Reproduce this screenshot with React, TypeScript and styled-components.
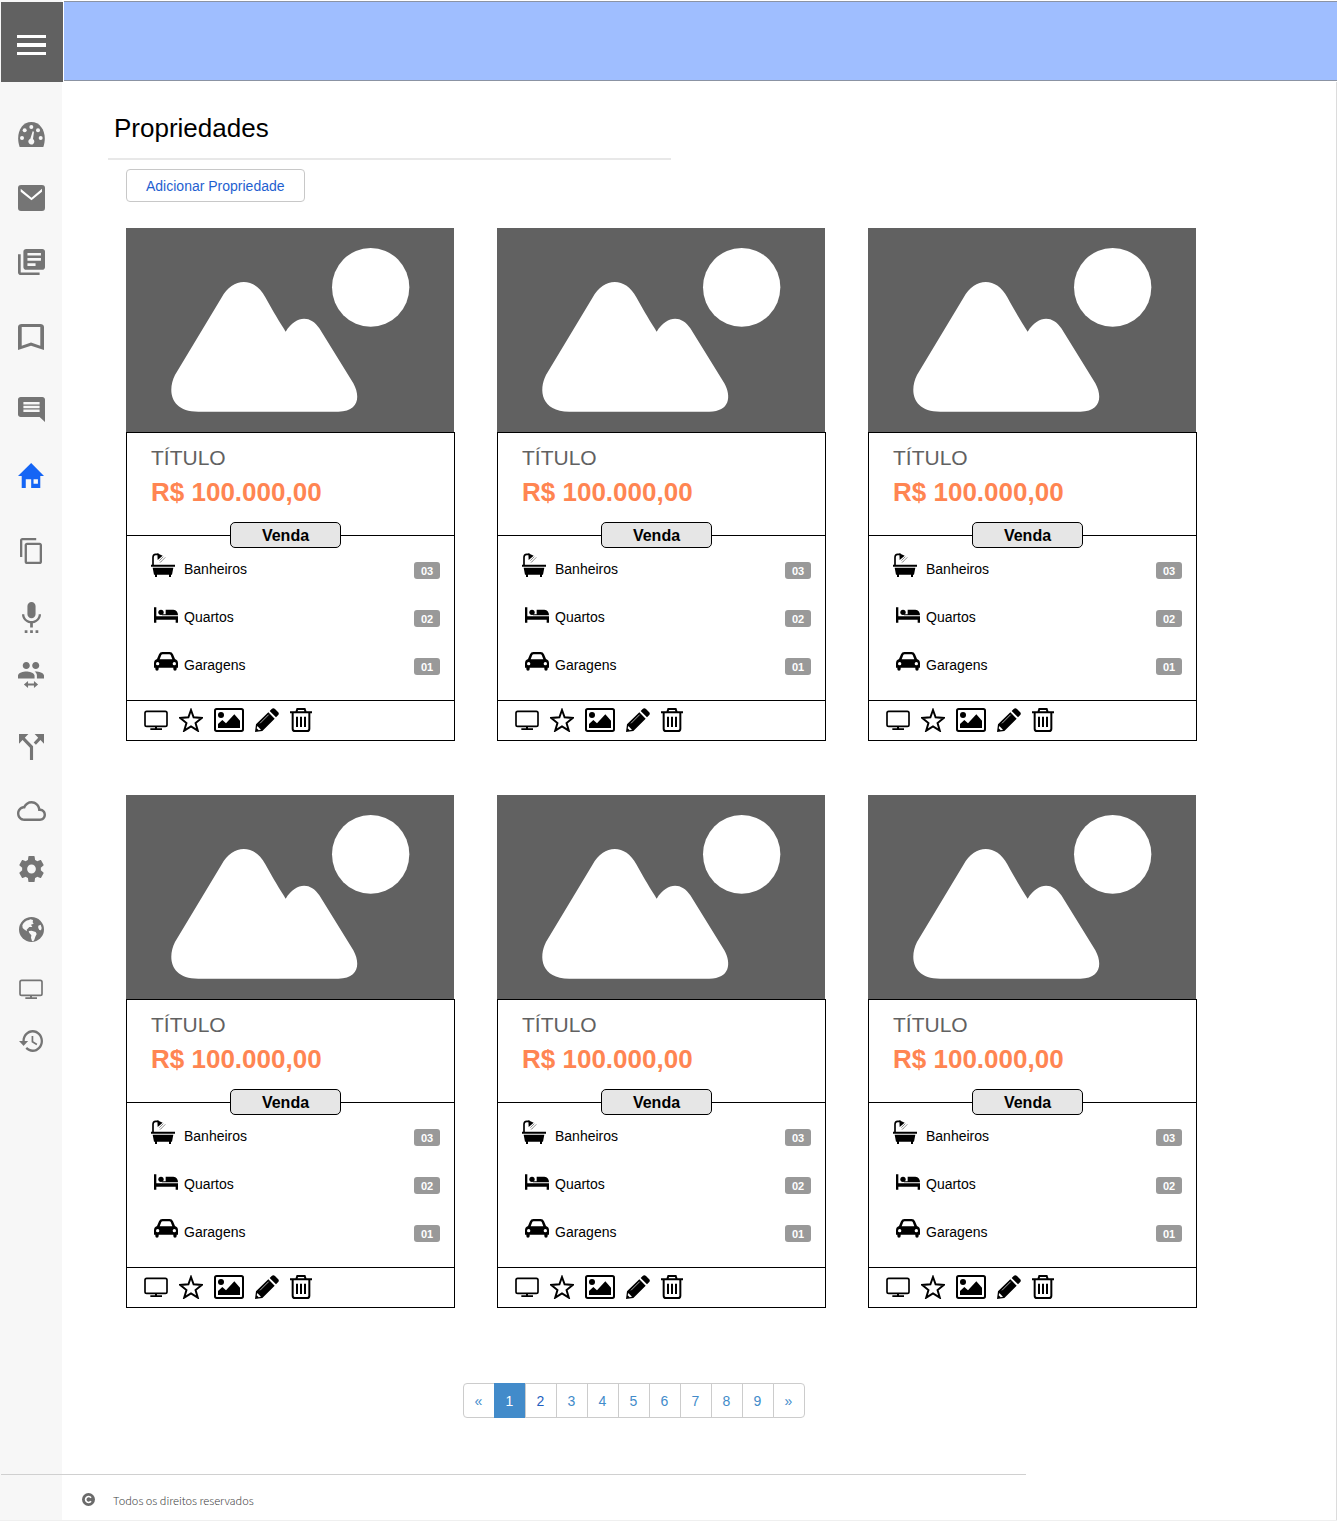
import React from "react";
import styled, { createGlobalStyle } from "styled-components";

const GlobalStyle = createGlobalStyle`
  *, *::before, *::after { box-sizing: border-box; }
  body {
    margin: 0;
    background: #fff;
    color: #000;
    font-family: "Liberation Sans", Arial, sans-serif;
    font-size: 14px;
  }
  svg { display: block; }
`;

const Page = styled.div`
  display: grid;
  grid-template-columns: 62px minmax(0, 1fr);
  grid-template-rows: auto 1fr auto;
  min-height: 100vh;
  border-bottom: 1px solid #efefef;
`;

const TopBar = styled.header`
  grid-column: 1 / -1;
  grid-row: 1;
  display: flex;
  align-items: flex-start;
  gap: 1px;
  padding: 1px 0 0 1px;
`;

const MenuButton = styled.button`
  display: grid;
  place-items: center;
  width: 62px;
  height: 80px;
  margin-top: 1px;
  padding: 6px 2px 0 0;
  border: 0;
  background: #616161;
  color: #fff;
`;

const Banner = styled.div`
  flex: 1;
  height: 80px;
  border: 1px solid #8b93a3;
  border-width: 1px 0;
  background: #9fbeff;
`;

const Sidebar = styled.nav`
  grid-column: 1;
  grid-row: 1 / 4;
  padding: 118px 0 0;
  background: #f7f7f7;
`;

const NavLink = styled.a<{ $gap: number; $active?: boolean }>`
  display: grid;
  place-items: center;
  height: 32px;
  margin-top: ${(p) => p.$gap}px;
  color: ${(p) => (p.$active ? "#1565f5" : "#757575")};
`;

const Main = styled.main`
  grid-column: 2;
  grid-row: 2;
  padding: 30px 46px 56px;
  border-right: 1px solid #dcdcdc;
`;

const Heading = styled.h1`
  width: 563px;
  max-width: 100%;
  margin: 0;
  padding: 0 6px 14px;
  border-bottom: 2px solid #e8e8e8;
  font-size: 26px;
  font-weight: 400;
  line-height: 32px;
`;

const Content = styled.div`
  padding: 9px 0 0 18px;
`;

const AddButton = styled.button`
  height: 33px;
  padding: 0 19px;
  border: 1px solid #c8c8c8;
  border-radius: 4px;
  background: #fff;
  color: #1f5fd0;
  font: inherit;
`;

const Cards = styled.div`
  display: grid;
  grid-template-columns: repeat(auto-fill, 329px);
  gap: 54px 42px;
  margin-top: 26px;
`;

const Card = styled.article`
  display: flex;
  flex-direction: column;
`;

const Photo = styled.svg`
  width: 328px;
  height: 204px;
  background: #616161;
  fill: #fff;
`;

const CardBody = styled.div`
  border: 1px solid #000;
`;

const Summary = styled.div`
  padding: 13px 24px 15px;
`;

const CardTitle = styled.h2`
  margin: 0 0 7px;
  color: #616161;
  font-size: 21px;
  font-weight: 400;
  line-height: 24px;
`;

const Price = styled.p`
  margin: 0;
  color: #ff8552;
  font-size: 26px;
  font-weight: 700;
  line-height: 30px;
`;

const Divider = styled.div`
  display: grid;
  grid-template-columns: 103px 111px 1fr;
  align-items: center;
  &::before, &::after {
    content: "";
    height: 1px;
    background: #000;
  }
`;

const Status = styled.span`
  height: 26px;
  border: 1px solid #000;
  border-radius: 5px;
  background: #e6e6e6;
  font-size: 16px;
  font-weight: 700;
  line-height: 25px;
  text-align: center;
`;

const Features = styled.ul`
  display: flex;
  flex-direction: column;
  gap: 16px;
  margin: 0;
  padding: 5px 14px 19px 24px;
  list-style: none;
`;

const Feature = styled.li`
  display: flex;
  align-items: center;
  gap: 3px;
  height: 32px;
  & > svg { align-self: flex-start; }
`;

const Count = styled.span`
  width: 26px;
  height: 17px;
  margin: 2px 0 0 auto;
  border-radius: 3px;
  background: #999;
  color: #fff;
  font-size: 11px;
  font-weight: 700;
  line-height: 18px;
  text-align: center;
`;

const Actions = styled.div`
  display: flex;
  align-items: center;
  gap: 11px;
  height: 40px;
  padding: 0 0 1px 17px;
  border-top: 1px solid #000;
`;

const ActionButton = styled.button`
  padding: 0;
  border: 0;
  background: none;
  color: #000;
`;

const Pager = styled.nav`
  display: flex;
  justify-content: center;
  width: 1071px;
  max-width: 100%;
  margin-top: 75px;
  padding-right: 56px;
`;

const PageLink = styled.a<{ $active?: boolean; $strong?: boolean }>`
  width: 32px;
  height: 35px;
  margin-left: -1px;
  border: 1px solid ${(p) => (p.$active ? "#428bca" : "#ccc")};
  background: ${(p) => (p.$active ? "#428bca" : "#fff")};
  color: ${(p) => (p.$active ? "#fff" : p.$strong ? "#1f5fc0" : "#428bca")};
  line-height: 35px;
  text-align: center;
  text-decoration: none;
  &:first-child { margin-left: 0; border-radius: 4px 0 0 4px; }
  &:last-child { border-radius: 0 4px 4px 0; }
`;

const Footer = styled.footer`
  grid-column: 1 / -1;
  grid-row: 3;
  display: flex;
  flex-wrap: wrap;
  align-items: center;
  border-right: 1px solid #dcdcdc;
`;

const FooterRule = styled.hr`
  width: 76.7%;
  height: 1px;
  margin: 0 20% 0 1px;
  border: 0;
  background: #d0d0d0;
`;

const Copyright = styled.small`
  display: flex;
  align-items: center;
  gap: 18px;
  height: 45px;
  padding: 4px 0 0 82px;
  color: #444;
  font-family: "Noto Sans CJK SC", "Open Sans", sans-serif;
  font-size: 11px;
  font-weight: 300;
  & > svg { color: #6a6a6a; }
`;

type IconProps = { w: number; h: number; box: string; children: React.ReactNode };

const Icon = ({ w, h, box, children }: IconProps) => (
  <svg width={w} height={h} viewBox={box} preserveAspectRatio="none" fill="currentColor" aria-hidden="true">
    {children}
  </svg>
);

const Monitor = () => (
  <Icon w={24} h={20} box="0 0 72 60">
    <rect x="3" y="4" width="66" height="45" rx="5" fill="none" stroke="currentColor" strokeWidth="5" />
    <path d="M33 49h6v6h15v5H19v-5h14z" />
  </Icon>
);

type NavItem = { label: string; gap: number; icon: React.ReactNode; active?: boolean };

const navItems: NavItem[] = [
  {
    label: "Painel", gap: 0, icon: (
      <Icon w={27} h={25} box="0 0 81 75">
        <path d="M5 75C-8 38 8 0 40 0s49 38 36 75z" />
        <g fill="#f7f7f7">
          <circle cx="12" cy="48" r="6" /><circle cx="20" cy="25" r="6" /><circle cx="40" cy="15" r="6" />
          <circle cx="60" cy="25" r="6" /><circle cx="68" cy="48" r="6" />
          <path d="M44 28l4 1-3 22a9 9 0 1 1-8-1z" />
        </g>
      </Icon>
    ),
  },
  {
    label: "Mensagens", gap: 32, icon: (
      <Icon w={27} h={26} box="0 0 80 77">
        <rect width="80" height="77" rx="9" />
        <path d="M8 11l32 27 31-27v9L40 45 8 20z" fill="#fff" />
      </Icon>
    ),
  },
  { label: "Biblioteca", gap: 32, icon: <Icon w={27} h={26} box="2 2 20 20"><path d="M4 6H2v14c0 1.1.9 2 2 2h14v-2H4V6zm16-4H8c-1.1 0-2 .9-2 2v12c0 1.1.9 2 2 2h12c1.1 0 2-.9 2-2V4c0-1.1-.9-2-2-2zm-1 9H9V9h10v2zm-4 4H9v-2h6v2zm4-8H9V5h10v2z" /></Icon> },
  { label: "Favoritos", gap: 43, icon: <Icon w={26} h={26} box="5 3 14 18"><path d="M17 3H7c-1.1 0-1.99.9-1.99 2L5 21l7-3 7 3V5c0-1.1-.9-2-2-2zm0 15l-5-2.18L7 18V5h10v13z" /></Icon> },
  { label: "Comentários", gap: 40, icon: <Icon w={27} h={25} box="2 2 20 20"><path d="M21.99 4c0-1.1-.89-2-1.99-2H4c-1.1 0-2 .9-2 2v12c0 1.1.9 2 2 2h14l4 4-.01-18zM18 14H6v-2h12v2zm0-3H6V9h12v2zm0-3H6V6h12v2z" /></Icon> },
  {
    label: "Propriedades", gap: 34, active: true, icon: (
      <Icon w={26} h={25} box="0 0 77 75"><path fillRule="evenodd" d="M0 39L39 0l38 39H66v36H11V39zM23 49v26h16V49zM46 49v13h13V49z" /></Icon>
    ),
  },
  { label: "Cópias", gap: 44, icon: <Icon w={22} h={26} box="2 1 19 22"><path d="M16 1H4c-1.1 0-2 .9-2 2v14h2V3h12V1zm3 4H8c-1.1 0-2 .9-2 2v14c0 1.1.9 2 2 2h11c1.1 0 2-.9 2-2V7c0-1.1-.9-2-2-2zm0 16H8V7h11v14z" /></Icon> },
  { label: "Voz", gap: 34, icon: <Icon w={19} h={31} box="5 1 14 23"><path d="M7 24h2v-2H7v2zm5-11c1.66 0 2.99-1.34 2.99-3L15 4c0-1.66-1.34-3-3-3S9 2.34 9 4v6c0 1.66 1.34 3 3 3zm-1 11h2v-2h-2v2zm4 0h2v-2h-2v2zm4-14h-1.7c0 3-2.54 5.1-5.3 5.1S6.700 13 6.700 10H5c0 3.410 2.720 6.230 6 6.720V20h2v-3.280c3.280-.49 6-3.310 6-6.720z" /></Icon> },
  {
    label: "Pessoas", gap: 26, icon: (
      <Icon w={26} h={26} box="1 5 22 22">
        <path d="M16 11c1.66 0 2.99-1.34 2.99-3S17.66 5 16 5c-1.66 0-3 1.34-3 3s1.34 3 3 3zm-8 0c1.66 0 2.99-1.34 2.99-3S9.66 5 8 5C6.34 5 5 6.34 5 8s1.34 3 3 3zm0 2c-2.33 0-7 1.17-7 3.5V19h14v-2.5c0-2.33-4.67-3.5-7-3.5zm8 0c-.29 0-.62.02-.97.05 1.16.84 1.97 1.97 1.97 3.45V19h6v-2.5c0-2.33-4.67-3.5-7-3.5z" />
        <path d="M6 24l3.500-3v2.200h5V21l3.500 3-3.500 3v-2.200h-5V27z" />
      </Icon>
    ),
  },
  { label: "Fluxos", gap: 40, icon: <Icon w={25} h={26} box="4 4 16 16"><path d="M14 4l2.29 2.29-2.88 2.88 1.42 1.42 2.88-2.88L20 10V4zm-4 0H4v6l2.29-2.29 4.71 4.7V20h2v-8.41l-5.29-5.3z" /></Icon> },
  { label: "Nuvem", gap: 32, icon: <Icon w={29} h={20} box="0 4 24 16"><path d="M19.35 10.04C18.67 6.59 15.64 4 12 4 9.11 4 6.6 5.64 5.35 8.04 2.34 8.36 0 10.91 0 14c0 3.31 2.69 6 6 6h13c2.76 0 5-2.24 5-5 0-2.64-2.05-4.78-4.65-4.96zM19 18H6c-2.21 0-4-1.79-4-4s1.79-4 4-4h.71C7.37 7.69 9.48 6 12 6c3.04 0 5.5 2.46 5.5 5.5v.5H19c1.66 0 3 1.34 3 3s-1.34 3-3 3z" /></Icon> },
  { label: "Configurações", gap: 26, icon: <Icon w={25} h={26} box="2 2 20 20"><path d="M19.43 12.98c.04-.32.07-.64.07-.98s-.03-.66-.07-.98l2.11-1.65c.19-.15.24-.42.12-.64l-2-3.46c-.12-.22-.39-.3-.61-.22l-2.49 1c-.52-.4-1.08-.73-1.69-.98l-.38-2.65C14.46 2.18 14.25 2 14 2h-4c-.25 0-.46.18-.49.42l-.38 2.65c-.61.25-1.17.59-1.69.98l-2.49-1c-.23-.09-.49 0-.61.22l-2 3.46c-.13.22-.07.49.12.64l2.11 1.65c-.04.32-.07.65-.07.98s.03.66.07.98l-2.11 1.65c-.19.15-.24.42-.12.64l2 3.46c.12.22.39.3.61.22l2.49-1c.52.4 1.08.73 1.69.98l.38 2.65c.03.24.24.42.49.42h4c.25 0 .46-.18.49-.42l.38-2.65c.61-.25 1.17-.59 1.69-.98l2.49 1c.23.09.49 0 .61-.22l2-3.46c.12-.22.07-.49-.12-.64l-2.11-1.65zM12 15.5c-1.93 0-3.5-1.57-3.5-3.5s1.57-3.5 3.5-3.5 3.5 1.57 3.5 3.5-1.57 3.5-3.5 3.5z" /></Icon> },
  {
    label: "Site", gap: 28, icon: (
      <Icon w={25} h={25} box="54 407 75 75">
        <circle cx="91.5" cy="444.5" r="37.5" />
        <g fill="#f7f7f7">
          <path d="M64 432q6-14 20-16l4-2 8 2-1 7 3 4-8 3 4 7-9 0-8 8 1 5-7-5-6-5z" />
          <path d="M83 449l9-1 12 4 3 6-4 8-3 9-3 5-4-1-3-10 1-7-6-7z" />
          <path d="M112 433l7-3q5 9 1 17l-5-1q-5-6-3-13z" />
        </g>
      </Icon>
    ),
  },
  { label: "Monitor", gap: 28, icon: <Monitor /> },
  { label: "Histórico", gap: 20, icon: <Icon w={24} h={22} box="1 3 21 18"><path d="M13 3c-4.97 0-9 4.03-9 9H1l3.89 3.89.07.14L9 12H6c0-3.87 3.13-7 7-7s7 3.13 7 7-3.13 7-7 7c-1.93 0-3.68-.79-4.94-2.06l-1.42 1.42C8.27 19.99 10.51 21 13 21c4.97 0 9-4.03 9-9s-4.03-9-9-9zm-1 5v5l4.28 2.54.72-1.21-3.5-2.08V8H12z" /></Icon> },
];

const features = [
  {
    label: "Banheiros", count: "03", icon: (
      <Icon w={30} h={24} box="0 0 90 72">
        <path d="M6 36V13Q6 4 14 4h9" fill="none" stroke="currentColor" strokeWidth="5" />
        <path d="M19 1l16 7-15 13zM0 35h72v6H0zM5 44h62l-4 21h-3v7h-6v-7H18v7h-6v-7H9z" />
        <path d="M25 23l12-12M31 25l12-12M27 29l5-5" stroke="#555" strokeWidth="2" />
      </Icon>
    ),
  },
  {
    label: "Quartos", count: "02", icon: (
      <Icon w={30} h={24} box="0 0 90 72">
        <path d="M9 19h7v27h65v19h-7v-9H16v9H9zM44 26h23q14 2 14 17H33v-3h11z" />
        <circle cx="30" cy="34" r="8" />
      </Icon>
    ),
  },
  {
    label: "Garagens", count: "01", icon: (
      <Icon w={30} h={24} box="0 0 90 72">
        <path fillRule="evenodd" d="M18 30l6-14q3-7 10-7h22q7 0 10 7l6 14q9 3 9 13v13h-4v4q0 5-5 5t-5-5v-4H23v4q0 5-5 5t-5-5v-4H9V43q0-10 9-13zM26 31h38l-5-13q-1-2-4-2H35q-3 0-4 2z" />
        <circle cx="20" cy="44" r="5" fill="#fff" />
        <circle cx="70" cy="44" r="5" fill="#fff" />
      </Icon>
    ),
  },
];

const actions = [
  { label: "Visualizar", icon: <Monitor /> },
  {
    label: "Destacar", icon: (
      <Icon w={24} h={24} box="176 355 74 72">
        <path d="M213 361l8 22 25 2-19 15 7 23-21-13-21 13 7-23-19-15 25-2z" fill="none" stroke="currentColor" strokeWidth="6" />
      </Icon>
    ),
  },
  {
    label: "Fotos", icon: (
      <Icon w={30} h={24} box="0 0 90 72">
        <rect x="3" y="3" width="84" height="66" rx="5" fill="none" stroke="currentColor" strokeWidth="6" />
        <circle cx="21" cy="21" r="9" />
        <path d="M12 60V48l13-12 11 10 25-27 17 19v22z" />
      </Icon>
    ),
  },
  {
    label: "Editar", icon: (
      <Icon w={24} h={24} box="0 0 72 72">
        <path d="M0 72l3-23 37-36 19 19-37 37zM44 9l6-6q5-5 10 0l9 9q5 5 0 10l-6 6z" />
        <path d="M15 46l26-26" stroke="#fff" strokeWidth="2" />
        <path d="M7 54l11 11-7 2-6-6z" fill="#fff" />
      </Icon>
    ),
  },
  {
    label: "Excluir", icon: (
      <Icon w={22} h={24} box="0 0 66 72">
        <path d="M0 13h66M19 12l3-9h22l3 9M8 14v48q0 7 7 7h36q7 0 7-7V14M21 26v31M33 26v31M45 26v31" fill="none" stroke="currentColor" strokeWidth="6" />
      </Icon>
    ),
  },
];

const PropertyCard = () => (
  <Card>
    <Photo viewBox="18 24 984 612" role="img" aria-label="Imagem da propriedade">
      <path d="M165 465L304 234C338 170 404 170 436 232C460 276 480 308 497 335C528 285 572 285 598 325L700 490C722 530 716 575 655 575H235C150 575 142 510 165 465z" />
      <ellipse cx="752" cy="202" rx="116" ry="118" />
    </Photo>
    <CardBody>
      <Summary>
        <CardTitle>TÍTULO</CardTitle>
        <Price>R$ 100.000,00</Price>
      </Summary>
      <Divider><Status>Venda</Status></Divider>
      <Features>
        {features.map((f) => (
          <Feature key={f.label}>
            {f.icon}
            {f.label}
            <Count>{f.count}</Count>
          </Feature>
        ))}
      </Features>
      <Actions>
        {actions.map((a) => (
          <ActionButton key={a.label} type="button" aria-label={a.label}>{a.icon}</ActionButton>
        ))}
      </Actions>
    </CardBody>
  </Card>
);

const pages = ["«", "1", "2", "3", "4", "5", "6", "7", "8", "9", "»"];

export default function App() {
  return (
    <>
      <GlobalStyle />
      <Page>
        <Sidebar aria-label="Principal">
          {navItems.map((n) => (
            <NavLink key={n.label} href="#" aria-label={n.label} $gap={n.gap} $active={n.active}>{n.icon}</NavLink>
          ))}
        </Sidebar>
        <TopBar>
          <MenuButton type="button" aria-label="Menu">
            <Icon w={29} h={20} box="0 0 29 20"><path d="M0 0h29v3H0zM0 8h29v4H0zM0 17h29v3H0z" /></Icon>
          </MenuButton>
          <Banner />
        </TopBar>
        <Main>
          <Heading>Propriedades</Heading>
          <Content>
            <AddButton type="button">Adicionar Propriedade</AddButton>
            <Cards>
              {[1, 2, 3, 4, 5, 6].map((id) => <PropertyCard key={id} />)}
            </Cards>
            <Pager aria-label="Paginação">
              {pages.map((p) => (
                <PageLink key={p} href="#" $active={p === "1"} $strong={p === "2"}>{p}</PageLink>
              ))}
            </Pager>
          </Content>
        </Main>
        <Footer>
          <FooterRule />
          <Copyright>
            <Icon w={13} h={13} box="0 0 39 39">
              <circle cx="19.5" cy="19.5" r="19.5" />
              <path d="M27 14a9 9 0 1 0 0 11" fill="none" stroke="#fff" strokeWidth="5" />
            </Icon>
            Todos os direitos reservados
          </Copyright>
        </Footer>
      </Page>
    </>
  );
}
